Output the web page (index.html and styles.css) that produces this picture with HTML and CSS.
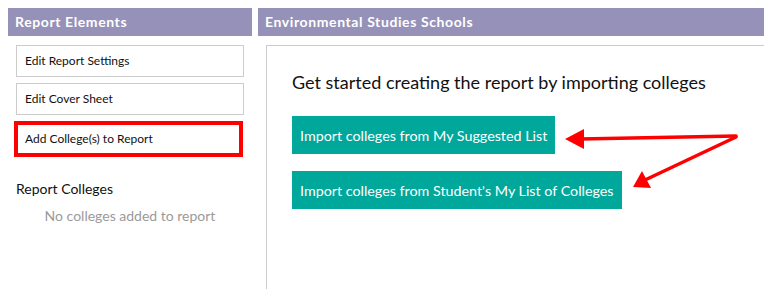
FILE: index.html
```html
<!DOCTYPE html>
<html>
<head>
<meta charset="utf-8">
<link rel="stylesheet" href="styles.css">
</head>
<body>
<div class="page">
  <aside class="sidebar">
    <div class="panel-head">Report Elements</div>
    <div class="side-body">
      <div class="item">Edit Report Settings</div>
      <div class="item">Edit Cover Sheet</div>
      <div class="item item-highlight">Add College(s) to Report</div>
      <div class="section-title">Report Colleges</div>
      <div class="empty">No colleges added to report</div>
    </div>
  </aside>
  <main class="main">
    <div class="panel-head">Environmental Studies Schools</div>
    <div class="main-body">
      <div class="content">
        <h2 class="lead">Get started creating the report by importing colleges</h2>
        <button class="btn">Import colleges from My Suggested List</button>
        <button class="btn">Import colleges from Student's My List of Colleges</button>
      </div>
    </div>
  </main>
</div>
<svg class="arrows" width="764" height="289" viewBox="0 0 764 289">
  <g stroke="#ff0000" stroke-width="3.5" stroke-linecap="round" fill="none">
    <line x1="736" y1="136" x2="580" y2="139"/>
    <line x1="736" y1="137" x2="645" y2="180"/>
  </g>
  <g fill="#ff0000">
    <polygon points="565,139 584,129 584,149"/>
    <polygon points="633,187 642,171 651,188"/>
  </g>
</svg>
</body>
</html>
```
FILE: styles.css
```css
html, body {
  margin: 0;
  padding: 0;
  background: #fff;
  overflow: hidden;
}
body {
  font-family: Lato, "Open Sans", sans-serif;
  color: #111;
  width: 764px;
  height: 289px;
  position: relative;
}
.page {
  display: flex;
  gap: 6px;
  padding: 8px 0 0 8px;
  height: 281px;
}
.sidebar {
  width: 244px;
  flex: none;
}
.panel-head {
  background: #9691b9;
  color: #fff;
  font-weight: 700;
  font-size: 14px;
  height: 28px;
  line-height: 28px;
  padding-left: 7px;
  letter-spacing: 0.6px;
}
.side-body {
  padding: 9px 8px 0 8px;
  display: flex;
  flex-direction: column;
  gap: 6px;
}
.item {
  height: 32px;
  box-sizing: border-box;
  border: 1px solid #cccccc;
  font-size: 12px;
  line-height: 30px;
  padding-left: 8px;
  color: #111;
}
.item-highlight {
  border: 4px solid #ff0000;
  height: 36px;
  width: 229px;
  margin-left: -2px;
  line-height: 28px;
  padding-left: 7px;
}
.section-title {
  margin-top: 17px;
  font-size: 14px;
  color: #111;
}
.empty {
  text-align: center;
  color: #9a9a9a;
  font-size: 14px;
  margin-top: 4px;
}
.main {
  flex: 1;
  min-width: 0;
  display: flex;
  flex-direction: column;
}
.main-body {
  flex: 1;
  padding-left: 8px;
  padding-top: 9px;
  display: flex;
}
.content {
  flex: 1;
  border-top: 1px solid #cccccc;
  border-left: 1px solid #cccccc;
  padding: 24px 0 0 25px;
}
.lead {
  margin: 0 0 22px 0;
  font-weight: 400;
  font-size: 18px;
  color: #111;
  line-height: 24px;
}
.btn {
  display: block;
  border: none;
  background: #00a89b;
  color: #fff;
  font-family: Lato, "Open Sans", sans-serif;
  font-size: 14.3px;
  height: 38px;
  padding: 0 8px;
  margin: 0 0 17px 0;
  cursor: pointer;
}
.arrows {
  position: absolute;
  left: 0;
  top: 0;
  pointer-events: none;
}
```
